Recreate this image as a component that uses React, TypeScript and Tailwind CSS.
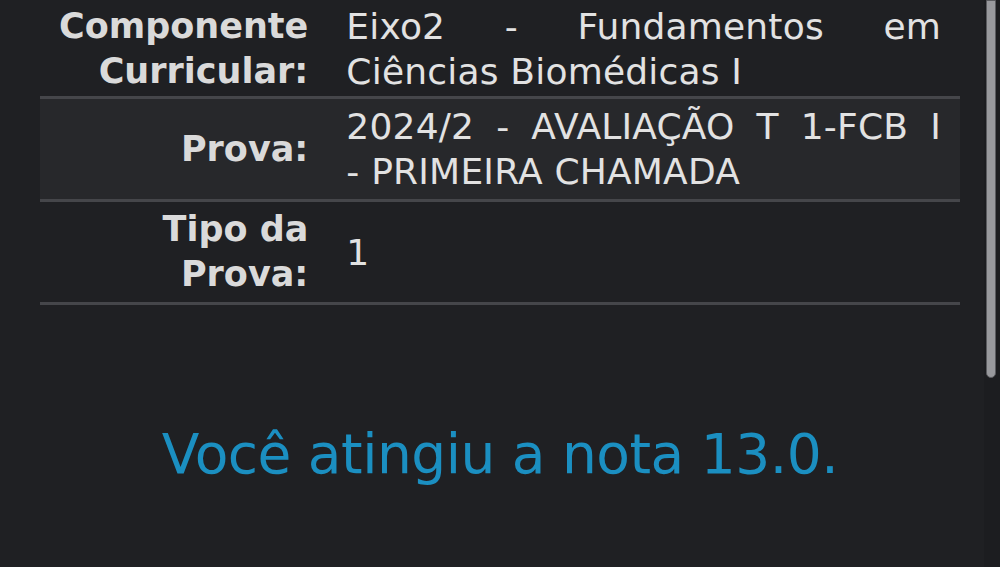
import { ReactNode } from 'react';

interface Row {
  label: string[];
  value: ReactNode;
  shaded: boolean;
  first?: boolean;
}

const rows: Row[] = [
  {
    label: ['Componente', 'Curricular:'],
    value: 'Eixo2 - Fundamentos em Ciências Biomédicas I',
    shaded: false,
    first: true,
  },
  {
    label: ['Prova:'],
    value: (
      <>
        2024/2 - AVALIAÇÃO T 1-FCB I{' '}
        <span className="whitespace-nowrap">- PRIMEIRA</span> CHAMADA
      </>
    ),
    shaded: true,
  },
  {
    label: ['Tipo da', 'Prova:'],
    value: '1',
    shaded: false,
  },
];

const App = () => {
  return (
    <div className="relative w-[1000px] h-[567px] overflow-hidden bg-[#1f2023] font-['DejaVu_Sans',sans-serif]">
      <div className="px-[40px]">
        <table className="-mt-[1px] w-full border-collapse leading-[45px]">
          <tbody>
            {rows.map((row, i) => (
              <tr
                key={i}
                className={`border-b-[3px] border-[#45464a] ${row.shaded ? 'bg-[#27282b]' : ''}`}
              >
                <th
                  className={`w-[287px] px-[19px] ${row.first ? 'pt-[5px] pb-[2px]' : 'py-[5px]'} text-right align-middle text-[35px] font-bold text-[#dadada]`}
                >
                  {row.label.map((l) => (
                    <div key={l}>{l}</div>
                  ))}
                </th>
                <td
                  className={`px-[19px] ${row.first ? 'pt-[5px] pb-[2px]' : 'py-[5px]'} text-justify align-middle text-[36px] tracking-[0.2px] text-[#e2e2e2]`}
                >
                  {row.value}
                </td>
              </tr>
            ))}
          </tbody>
        </table>
        <p className="mt-[122px] text-center text-[55px] leading-[55px] tracking-[-0.5px] text-[#1b8fc1]">
          Você atingiu a nota 13.0.
        </p>
      </div>
      {/* scrollbar */}
      <div className="absolute right-0 top-0 h-full w-[16px] bg-[#1c1d20]">
        <div className="ml-[2px] h-[378px] w-[10px] rounded-b-full border border-[#5a5b5f] bg-[#98999d]" />
      </div>
    </div>
  );
};

export default App;
